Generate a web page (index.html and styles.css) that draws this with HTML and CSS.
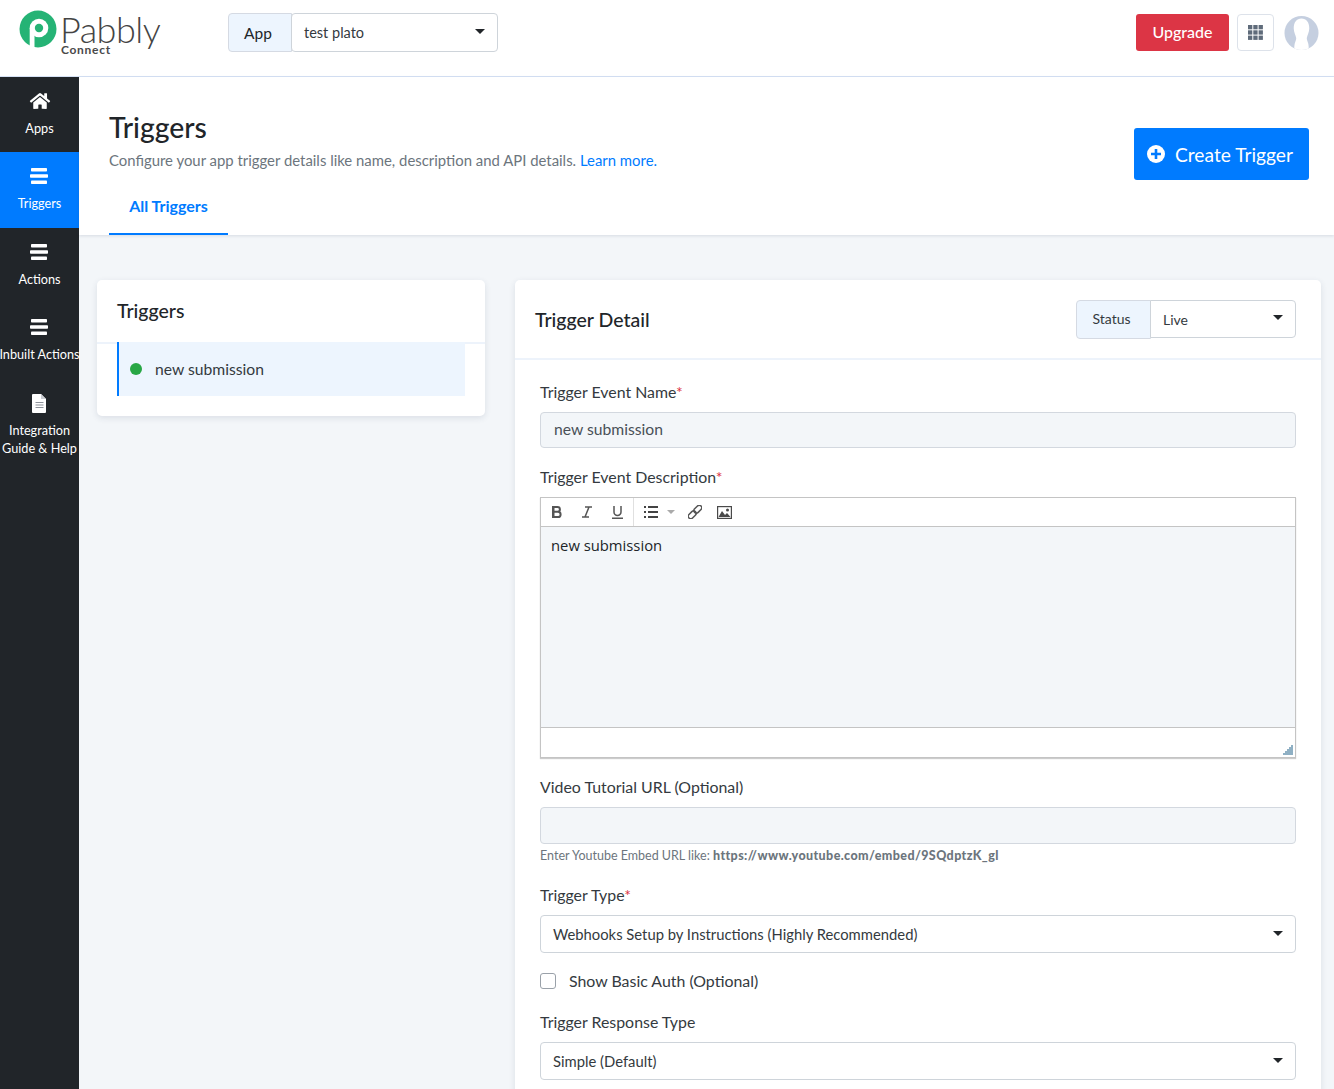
FILE: index.html
```html
<!DOCTYPE html>
<html lang="en">
<head>
<meta charset="utf-8">
<title>Triggers - Pabbly Connect</title>
<link rel="stylesheet" href="styles.css">
</head>
<body>
<header class="topbar">
  <div class="logo">
    <svg class="logo-mark" width="38" height="38" viewBox="0 0 38 38"><circle cx="19" cy="19" r="18.500" fill="#25b375"/><circle cx="20" cy="18" r="9.300" fill="#fff"/><rect x="10.700" y="18" width="4.800" height="20" fill="#fff"/><circle cx="20" cy="18" r="4.200" fill="#25b375"/></svg>
    <div class="logo-text"><span class="logo-name">Pabbly</span><span class="logo-sub">Connect</span></div>
  </div>
  <div class="app-select">
    <span class="addon addon-app">App</span>
    <div class="select select-app"><span>test plato</span><i class="caret"></i></div>
  </div>
  <div class="top-actions">
    <button class="btn-upgrade">Upgrade</button>
    <button class="btn-grid" aria-label="Apps">
      <svg width="15" height="15" viewBox="0 0 15 15" fill="#5f6b7a"><rect width="4.300" height="4.300"/><rect x="5.300" width="4.300" height="4.300"/><rect x="10.600" width="4.300" height="4.300"/><rect y="5.300" width="4.300" height="4.300"/><rect x="5.300" y="5.300" width="4.300" height="4.300"/><rect x="10.600" y="5.300" width="4.300" height="4.300"/><rect y="10.600" width="4.300" height="4.300"/><rect x="5.300" y="10.600" width="4.300" height="4.300"/><rect x="10.600" y="10.600" width="4.300" height="4.300"/></svg>
    </button>
    <svg class="avatar" width="35" height="36" viewBox="0 0 36 36"><defs><clipPath id="avatar-clip"><circle cx="18" cy="18" r="17.500"/></clipPath></defs><circle cx="18" cy="18" r="17.500" fill="#c5cfe0"/><g clip-path="url(#avatar-clip)"><path fill="#fff" d="M18 3c5 0 8 4 8 10 0 4-2 7-2.500 10-.3 2 1 4 1.500 6 .4 2 .5 5 .5 7h-15c0-2 .1-5 .5-7 .5-2 1.800-4 1.500-6C12 20 10 17 10 13c0-6 3-10 8-10z"/></g></svg>
  </div>
</header>
<div class="shell">
  <nav class="sidebar">
    <a class="nav-item">
      <svg class="nav-icon" width="22" height="18" viewBox="0 0 576 512" fill="#fff"><path d="M280.400 148.300 96 300.100V464a16 16 0 0 0 16 16l112.100-.3a16 16 0 0 0 15.900-16V368a16 16 0 0 1 16-16h64a16 16 0 0 1 16 16v95.600a16 16 0 0 0 16 16.100L464 480a16 16 0 0 0 16-16V300L295.700 148.300a12.200 12.200 0 0 0-15.300 0zM571.600 251.500 488 182.600V44a12 12 0 0 0-12-12h-56a12 12 0 0 0-12 12v72.600L318.500 43a48 48 0 0 0-61 0L4.300 251.500a12 12 0 0 0-1.600 16.900l25.500 31A12 12 0 0 0 45.200 301l235.200-193.700a12.200 12.200 0 0 1 15.300 0L530.900 301a12 12 0 0 0 16.900-1.600l25.500-31a12 12 0 0 0-1.700-16.900z"/></svg>
      <span>Apps</span>
    </a>
    <a class="nav-item active">
      <svg class="nav-icon" width="19" height="18" viewBox="0 -1 19 18" fill="#fff"><rect x="1" y="0" width="16" height="3.500" rx=".8"/><rect x="0" y="6.200" width="18" height="3.500" rx=".8"/><rect x="1" y="12.500" width="16" height="3.500" rx=".8"/></svg>
      <span>Triggers</span>
    </a>
    <a class="nav-item">
      <svg class="nav-icon" width="19" height="18" viewBox="0 -1 19 18" fill="#fff"><rect x="1" y="0" width="16" height="3.500" rx=".8"/><rect x="0" y="6.200" width="18" height="3.500" rx=".8"/><rect x="1" y="12.500" width="16" height="3.500" rx=".8"/></svg>
      <span>Actions</span>
    </a>
    <a class="nav-item">
      <svg class="nav-icon" width="19" height="18" viewBox="0 -1 19 18" fill="#fff"><rect x="1" y="0" width="16" height="3.500" rx=".8"/><rect x="0" y="6.200" width="18" height="3.500" rx=".8"/><rect x="1" y="12.500" width="16" height="3.500" rx=".8"/></svg>
      <span>Inbuilt Actions</span>
    </a>
    <a class="nav-item">
      <svg class="nav-icon" width="15" height="19" viewBox="0 0 15 19"><path fill="#fff" d="M1 0h8l5 5v13a1 1 0 0 1-1 1H1a1 1 0 0 1-1-1V1a1 1 0 0 1 1-1z"/><path fill="#8d929a" d="M3.500 8h8v1h-8zM3.500 10.500h8v1h-8zM3.500 13h8v1h-8z"/><path fill="#c9ccd1" d="M9 0l5 5H9z"/></svg>
      <span>Integration<br>Guide &amp; Help</span>
    </a>
  </nav>
  <main class="main">
    <section class="page-head">
      <div class="page-row">
        <div class="page-title">
          <h1>Triggers</h1>
          <p>Configure your app trigger details like name, description and API details. <a>Learn more.</a></p>
        </div>
        <button class="btn-create">
          <svg width="18" height="18" viewBox="0 0 18 18"><circle cx="9" cy="9" r="9" fill="#fff"/><path fill="#007bff" d="M7.700 4h2.600v3.700H14v2.600h-3.700V14H7.700v-3.700H4V7.700h3.700z"/></svg>
          Create Trigger
        </button>
      </div>
      <div class="tabs"><a class="tab">All Triggers</a></div>
    </section>
    <div class="columns">
      <aside class="card list-card">
        <h2 class="list-title">Triggers</h2>
        <div class="list-body">
          <div class="list-item"><i class="dot"></i><span>new submission</span></div>
        </div>
      </aside>
      <section class="card detail-card">
        <div class="detail-head">
          <h2>Trigger Detail</h2>
          <div class="status-select">
            <span class="addon addon-status">Status</span>
            <div class="select select-status"><span>Live</span><i class="caret"></i></div>
          </div>
        </div>
        <form class="detail-form">
          <div class="field">
            <label>Trigger Event Name<b>*</b></label>
            <div class="input">new submission</div>
          </div>
          <div class="field field-desc">
            <label>Trigger Event Description<b>*</b></label>
            <div class="editor">
              <div class="editor-tools">
                <div class="tool-group">
                  <svg width="10" height="12" viewBox="0 0 10 12" fill="none" stroke="#555" stroke-width="2"><path d="M1 1h4.500a2.400 2.400 0 0 1 0 4.800H1zM1 5.800h5a2.600 2.600 0 0 1 0 5.200H1zM1.500 0v12"/></svg>
                  <svg width="12" height="12" viewBox="0 0 12 12" fill="none" stroke="#555" stroke-width="1.500"><path d="M4 1h7M1 11h7M8 1 4 11"/></svg>
                  <svg width="11" height="13" viewBox="0 0 11 13" fill="none" stroke="#555" stroke-width="1.500"><path d="M2 0v6a3.500 3.500 0 0 0 7 0V0M0 12.300h11"/></svg>
                </div>
                <div class="tool-group tool-group-2">
                  <svg width="14" height="12" viewBox="0 0 14 12" fill="#444"><rect width="2" height="2" y="0"/><rect width="2" height="2" y="5"/><rect width="2" height="2" y="10"/><rect x="4" width="10" height="2" y="0"/><rect x="4" width="10" height="2" y="5"/><rect x="4" width="10" height="2" y="10"/></svg>
                  <i class="tool-caret"></i>
                  <svg class="tool-link" width="14" height="14" viewBox="0 0 14 14" fill="none" stroke="#555" stroke-width="1.500"><g transform="rotate(-45 7 7)"><rect x="-1.500" y="4.500" width="9" height="5" rx="2.500"/><rect x="6.500" y="4.500" width="9" height="5" rx="2.500"/></g></svg>
                  <svg class="tool-image" width="15" height="13" viewBox="0 0 15 13"><rect width="15" height="13" fill="#4a4a4a"/><rect x="1.200" y="1.200" width="12.600" height="10.600" fill="#fff"/><circle cx="10.500" cy="4" r="1.500" fill="#4a4a4a"/><path fill="#4a4a4a" d="M1.500 11 5 5l3 4 2-2 3.500 4z"/></svg>
                </div>
              </div>
              <div class="editor-body">new submission</div>
              <div class="editor-foot">
                <svg width="10" height="10" viewBox="0 0 10 10" fill="#8fb0c4"><rect x="8" y="0" width="2" height="2"/><rect x="6" y="2" width="4" height="2"/><rect x="4" y="4" width="6" height="2"/><rect x="2" y="6" width="8" height="2"/><rect x="0" y="8" width="10" height="2"/></svg>
              </div>
            </div>
          </div>
          <div class="field field-video">
            <label>Video Tutorial URL (Optional)</label>
            <div class="input"></div>
            <small class="hint">Enter Youtube Embed URL like: <b>https://www.youtube.com/embed/9SQdptzK_gl</b></small>
          </div>
          <div class="field field-type">
            <label>Trigger Type<b>*</b></label>
            <div class="select select-wide"><span>Webhooks Setup by Instructions (Highly Recommended)</span><i class="caret"></i></div>
          </div>
          <div class="check-row"><i class="checkbox"></i><span>Show Basic Auth (Optional)</span></div>
          <div class="field">
            <label>Trigger Response Type</label>
            <div class="select select-wide"><span>Simple (Default)</span><i class="caret"></i></div>
          </div>
        </form>
      </section>
    </div>
  </main>
</div>
</body>
</html>
```
FILE: styles.css
```css
* { box-sizing: border-box; }
html, body { margin: 0; height: 100%; overflow: hidden; }
body { font-family: "Lato", "Noto Sans", sans-serif; font-size: 15px; color: #212529; background: #f3f6f9; }
button { font-family: inherit; cursor: pointer; }
a { text-decoration: none; }
h1, h2, p { margin: 0; }

.topbar { height: 77px; background: #fff; border-bottom: 1px solid #d6e2f5; display: flex; align-items: center; padding: 0 15px 11px 19px; }
.logo { width: 209px; display: flex; align-items: flex-start; gap: 4px; height: 46px; }
.logo-mark { flex: none; }
.logo-text { display: flex; flex-direction: column; }
.logo-name { font-family: "Lato", sans-serif; font-weight: 300; font-size: 36px; line-height: 34px; color: #444; letter-spacing: -.5px; margin-top: 2px; margin-left: -1px; }
.logo-sub { font-size: 12px; font-weight: 700; line-height: 10px; color: #4a4a4a; letter-spacing: .7px; margin-top: -1px; }

.app-select { display: flex; width: 270px; height: 39px; }
.addon { display: flex; align-items: center; justify-content: center; background: #edf5fe; border: 1px solid #d5dae3; border-radius: 4px 0 0 4px; }
.addon-app { width: 64px; font-size: 15.500px; padding-right: 4px; }
.select { display: flex; align-items: center; justify-content: space-between; background: #fff; border: 1px solid #ced4da; border-radius: 4px; font-size: 14.500px; padding: 0 12px; color: #343a40; }
.select-app { flex: 1; margin-left: -1px; }
.caret { width: 0; height: 0; border-left: 5px solid transparent; border-right: 5px solid transparent; border-top: 5px solid #212529; flex: none; margin-bottom: 2px; }

.top-actions { margin-left: auto; display: flex; align-items: center; }
.btn-upgrade { width: 93px; height: 37px; background: #dc3545; color: #fff; border: 0; border-radius: 3px; font-size: 16px; font-weight: 500; padding: 0 0 3px; }
.btn-grid { width: 37px; height: 37px; margin-left: 8px; background: #fff; border: 1px solid #dde2ea; border-radius: 4px; display: flex; align-items: center; justify-content: center; padding: 0; }
.avatar { margin-left: 10px; }

.shell { display: flex; height: calc(100vh - 77px); }
.sidebar { width: 79px; flex: none; background: #212529; }
.nav-item { display: flex; flex-direction: column; align-items: center; height: 75px; padding-top: 15px; color: #fff; font-size: 12.700px; line-height: 18px; text-align: center; white-space: nowrap; }
.nav-item:nth-child(even) { height: 76px; }
.nav-item.active { background: #007bff; }
.nav-icon { flex: none; margin-bottom: 8.500px; }
.nav-item:nth-child(even) .nav-icon { margin-bottom: 9px; }
.nav-item:last-child .nav-icon { margin-bottom: 7.500px; }

.main { flex: 1; min-width: 0; }
.page-head { height: 158px; background: #fff; box-shadow: 0 1px 3px rgba(40, 60, 90, .14); padding: 0 25px 0 30px; }
.page-row { display: flex; justify-content: space-between; height: 106px; }
.page-title { padding-top: 32px; }
h1 { font-size: 28.300px; font-weight: 500; line-height: 36px; color: #212529; }
.page-title p { font-size: 14.900px; line-height: 20px; margin-top: 5px; color: #6c757d; }
.page-title a { color: #007bff; }
.btn-create { display: flex; align-items: center; gap: 10px; width: 175px; height: 52px; margin-top: 51px; padding: 0 0 0 13px; background: #007bff; color: #fff; border: 0; border-radius: 3px; font-size: 19.200px; }
.tabs { display: flex; }
.tab { display: flex; align-items: center; justify-content: center; width: 119px; height: 52px; padding-bottom: 6px; border-bottom: 2px solid #007bff; color: #007bff; font-size: 16px; font-weight: 700; }

.columns { display: flex; align-items: flex-start; gap: 30px; padding: 45px 13px 0 18px; }
.card { background: #fff; border-radius: 5px; box-shadow: 0 2px 6px rgba(40, 60, 90, .12); }
.list-card { width: 388px; flex: none; padding-bottom: 20px; }
.list-title { height: 64px; padding: 19px 20px 0; font-size: 19.500px; line-height: 24px; font-weight: 500; border-bottom: 2px solid #edf3fb; }
.list-body { padding: 0 20px; margin-top: -2px; }
.list-item { display: flex; align-items: center; height: 54px; background: #edf5fe; border-left: 2px solid #007bff; padding-left: 11px; font-size: 15.700px; color: #343a40; }
.dot { width: 12px; height: 12px; border-radius: 50%; background: #28a745; margin-right: 13px; }

.detail-card { flex: 1; min-width: 0; height: 1000px; }
.detail-head { display: flex; align-items: center; justify-content: space-between; height: 80px; padding: 0 25px 0 20px; border-bottom: 2px solid #edf3fb; }
.detail-head h2 { font-size: 19.500px; font-weight: 500; }
.status-select { display: flex; width: 220px; height: 39px; }
.addon-status { width: 75px; font-size: 14px; color: #343a40; padding: 0 4px 2px 0; }
.select-status { flex: 1; margin-left: -1px; border-radius: 0 4px 4px 0; height: 38px; padding: 2px 12px 0; font-size: 14px; }
.select-status .caret { margin-bottom: 5px; }

.detail-form { padding: 20px 25px 0; }
.field label { display: block; font-size: 15.900px; line-height: 24px; color: #343a40; margin-bottom: 8px; }
.field label b { color: #dc3545; font-weight: 400; }
.input { height: 36px; background: #f3f6f9; border: 1px solid #d3d8df; border-radius: 4px; padding: 0 13px 2px; display: flex; align-items: center; font-size: 15.700px; color: #495057; }
.field-desc { margin-top: 17px; }
.editor { border: 1px solid #c4c4c4; box-shadow: 0 1px 1px rgba(0,0,0,.2); }
.editor-tools { display: flex; height: 29px; background: #fff; border-bottom: 1px solid #c4c4c4; }
.tool-group { display: flex; align-items: center; gap: 19px; padding: 0 10px 0 11px; border-right: 1px solid #e0e0e0; }
.tool-group-2 { border: 0; gap: 0; padding-left: 10px; }
.tool-caret { width: 0; height: 0; margin-left: 9px; border-left: 4px solid transparent; border-right: 4px solid transparent; border-top: 4px solid #aaa; }
.tool-link { margin-left: 13px; }
.tool-image { margin-left: 15px; }
.editor-body { height: 201px; background: #f3f6f9; border-bottom: 1px solid #c4c4c4; padding: 9px 10px; font-family: "Open Sans", sans-serif; font-size: 14.800px; line-height: 18px; }
.editor-foot { height: 29px; background: #fff; display: flex; justify-content: flex-end; align-items: flex-end; padding: 0 2px 2px 0; }
.field-video { margin-top: 17px; }
.field-video .input { height: 37px; }
.hint { display: block; margin-top: 4px; font-size: 12.500px; line-height: 16px; color: #6c757d; }
.hint b { font-weight: 900; letter-spacing: .4px; }
.field-type { margin-top: 19px; }
.select-wide { height: 38px; font-size: 14.800px; }
.check-row { display: flex; align-items: center; margin-top: 16px; margin-bottom: 17px; font-size: 15.900px; color: #343a40; line-height: 24px; }
.checkbox { width: 16px; height: 16px; border: 1px solid #9aa1a9; border-radius: 3px; background: #fff; margin-right: 13px; }
```
